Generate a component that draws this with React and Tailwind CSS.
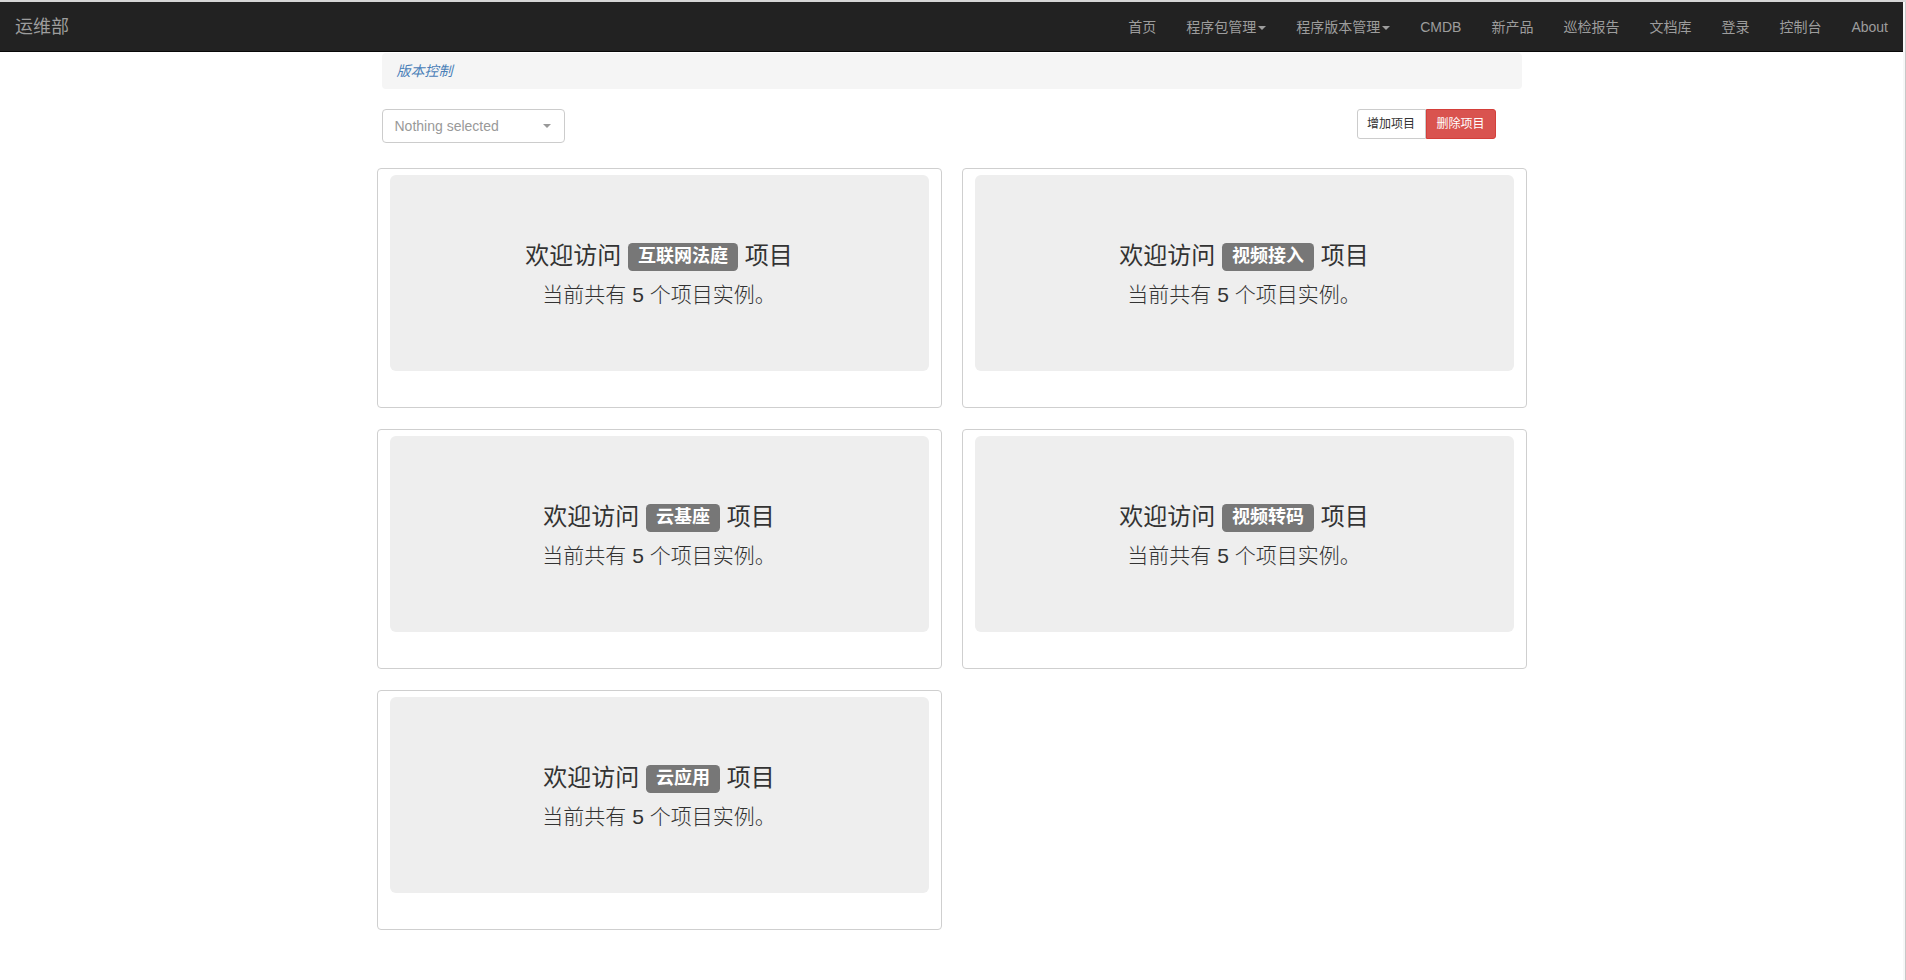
import React from "react";

const FONT = "font-['Liberation_Sans','Noto_Sans_CJK_SC',sans-serif]";

const navItems = [
  { label: "首页" },
  { label: "程序包管理", caret: true },
  { label: "程序版本管理", caret: true },
  { label: "CMDB" },
  { label: "新产品" },
  { label: "巡检报告" },
  { label: "文档库" },
  { label: "登录" },
  { label: "控制台" },
  { label: "About" },
];

const projects = ["互联网法庭", "视频接入", "云基座", "视频转码", "云应用"];

function Caret({ color = "border-t-[#9d9d9d]" }) {
  return (
    <span
      className={`ml-[2px] inline-block h-0 w-0 border-x-[4px] border-t-[4px] border-x-transparent align-middle ${color}`}
    />
  );
}

function Card({ name }) {
  return (
    <div className="h-[240px] rounded-[4px] border border-[#cfcfcf] bg-white px-[12px] pt-[6px] pb-[36px]">
      <div className="h-[196px] rounded-[6px] bg-[#eeeeee] pt-[63px] text-center text-[#333333]">
        <div className="h-[36px] text-[24px] leading-[36px]">
          欢迎访问{" "}
          <span className="inline-block rounded-[4.5px] bg-[#777777] px-[10px] pt-[2px] pb-[4px] align-[2px] text-[18px] font-bold leading-[22px] text-white">
            {name}
          </span>{" "}
          项目
        </div>
        <div className="mt-[6px] text-[21px] leading-[30px] font-light text-[#333333]">
          当前共有 5 个项目实例。
        </div>
      </div>
    </div>
  );
}

export default function App() {
  return (
    <div className={`flex min-h-[980px] w-[1906px] bg-white ${FONT}`}>
      <div className="flex w-[1903px] flex-col">
        <div className="h-[2px] bg-[#d6d6d6]" />
        <nav className="flex h-[50px] items-center justify-between border-b border-[#080808] bg-[#222222]">
          <div className="pl-[15px] text-[18px] leading-[20px] text-[#9d9d9d]">运维部</div>
          <ul className="flex items-center">
            {navItems.map((it) => (
              <li
                key={it.label}
                className="px-[15px] text-[14px] leading-[20px] text-[#9d9d9d] whitespace-nowrap"
              >
                {it.label}
                {it.caret && <Caret />}
              </li>
            ))}
          </ul>
        </nav>

        <main className="mx-auto w-[1140px] pt-[1px] pb-[47px]">
          <div className="h-[36px] rounded-[4px] bg-[#f5f5f5] px-[15px] py-[8px] text-[14px] italic leading-[20px] text-[#4a80b8]">
            版本控制
          </div>

          <div className="mt-[20px] flex items-start justify-between">
            <div className="flex h-[34px] w-[183px] items-center justify-between rounded-[4px] border border-[#cccccc] bg-white pl-[12px] pr-[13px] text-[14px] text-[#999999]">
              <span>Nothing selected</span>
              <Caret color="border-t-[#999999]" />
            </div>
            <div className="mr-[26px] flex h-[30px]">
              <button className="h-[30px] w-[69px] rounded-l-[3px] border border-[#cccccc] bg-white text-[12px] leading-[18px] text-[#333333]">
                增加项目
              </button>
              <button className="h-[30px] w-[70px] rounded-r-[3px] border border-[#d43f3a] bg-[#d9534f] text-[12px] leading-[18px] text-white">
                删除项目
              </button>
            </div>
          </div>

          <div className="-mx-[5px] mt-[25px] grid grid-cols-2 gap-x-[20px] gap-y-[21px]">
            {projects.map((p) => (
              <Card key={p} name={p} />
            ))}
          </div>
        </main>
      </div>
      <div className="flex w-[3px] flex-col">
        <div className="h-[2px] bg-[#d6d6d6]" />
        <div className="flex-1 border-r border-[#c8c8c8] bg-[#f7f7f7]" />
      </div>
    </div>
  );
}
